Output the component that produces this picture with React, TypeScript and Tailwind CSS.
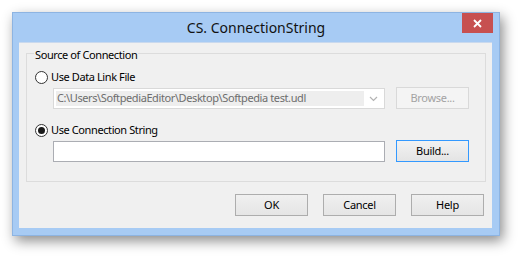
import React from "react";

const font = { fontFamily: '"Noto Sans", "Open Sans", sans-serif' };

function Radio({ checked }: { checked?: boolean }) {
  return (
    <span className="flex h-[13px] w-[13px] items-center justify-center rounded-full border border-[#333333] bg-white">
      {checked && <span className="h-[7px] w-[7px] rounded-full bg-[#1a1a1a]" />}
    </span>
  );
}

function Btn({ children, variant = "normal" }: { children: React.ReactNode; variant?: "normal" | "focus" | "disabled" }) {
  const cls =
    variant === "disabled"
      ? "border-[#d9d9d9] bg-[#f4f4f4] text-[#a3a3a3]"
      : variant === "focus"
      ? "border-[#3399ff] bg-gradient-to-b from-[#f2f2f2] to-[#e4e4e4] text-black"
      : "border-[#adadad] bg-gradient-to-b from-[#f0f0f0] to-[#e5e5e5] text-black";
  return (
    <div className={`flex h-[22px] w-[73px] items-center justify-center border text-[11px] tracking-[-0.3px] ${cls}`}>{children}</div>
  );
}

export default function App() {
  return (
    <div className="h-[256px] w-[520px] overflow-hidden bg-white pl-[12px] pt-[12px]" style={font}>
      <div className="flex h-[224px] w-[488px] flex-col border border-[#8db4e2] bg-[#a7cbf4] shadow-[3px_5px_12px_rgba(0,0,0,0.45)]">
        <div className="relative flex h-[29px] items-center justify-center">
          <span className="text-[14px] text-[#111]">CS. ConnectionString</span>
          <div className="absolute right-[6px] top-0 flex h-[20px] w-[31px] items-center justify-center bg-[#c75050]">
            <svg width="9" height="9" viewBox="0 0 9 9">
              <path d="M1 1 L8 8 M8 1 L1 8" stroke="white" strokeWidth="1.8" />
            </svg>
          </div>
        </div>
        <div className="ml-[6px] flex h-[186px] w-[473px] flex-col border-t border-[#c9d9ee] bg-[#f0f0f0] text-[11px] tracking-[-0.4px]">
          <div className="relative ml-[7px] mt-[10px] h-[129px] w-[460px] border border-[#dcdcdc]">
            <span className="absolute left-[7px] top-[-7px] bg-[#f0f0f0] px-[1px] leading-[16px] text-black">
              Source of Connection
            </span>
            <div className="mt-[15px] flex h-[16px] items-center gap-[3px] pl-[8px] text-black">
              <Radio />
              <span>Use Data Link File</span>
            </div>
            <div className="mt-[2px] flex items-start gap-[11px] pl-[26px]">
              <div className="mt-[1px] flex h-[21px] w-[332px] border border-[#d9d9d9] bg-white p-[2px]">
                <div className="flex flex-1 items-center bg-[#eeeeee] pl-[1px] text-[#6d6d6d]">
                  C:\Users\SoftpediaEditor\Desktop\Softpedia test.udl
                </div>
                <div className="flex w-[18px] items-center justify-center">
                  <svg width="9" height="6" viewBox="0 0 9 6">
                    <path d="M1 1 L4.5 4.5 L8 1" stroke="#b3b3b3" strokeWidth="1.2" fill="none" />
                  </svg>
                </div>
              </div>
              <Btn variant="disabled">Browse...</Btn>
            </div>
            <div className="mt-[13px] flex h-[16px] items-center gap-[3px] pl-[8px] text-black">
              <Radio checked />
              <span>Use Connection String</span>
            </div>
            <div className="mt-[2px] flex items-start gap-[11px] pl-[26px]">
              <div className="mt-[1px] h-[21px] w-[332px] border border-[#abadb3] bg-white" />
              <Btn variant="focus">Build...</Btn>
            </div>
          </div>
          <div className="mt-[12px] flex justify-end gap-[15px] pr-[8px]">
            <Btn>OK</Btn>
            <Btn>Cancel</Btn>
            <Btn>Help</Btn>
          </div>
        </div>
      </div>
    </div>
  );
}
